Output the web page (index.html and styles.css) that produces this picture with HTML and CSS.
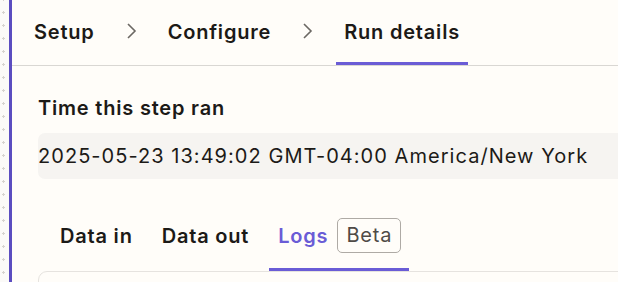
FILE: index.html
```html
<!DOCTYPE html>
<html lang="en">
<head>
  <meta charset="UTF-8">
  <meta name="viewport" content="width=device-width, initial-scale=1.0">
  <title>Run details</title>
  <link rel="stylesheet" href="styles.css">
</head>
<body>
<div class="layout">
  <div class="canvas-edge"></div>
  <div class="panel">
    <nav class="steps">
      <div class="step">Setup</div>
      <span class="chevron"><svg width="11" height="16" viewBox="0 0 11 16"><path d="M2 1 L9 8 L2 15" fill="none" stroke="#6b6863" stroke-width="1.6"/></svg></span>
      <div class="step">Configure</div>
      <span class="chevron"><svg width="11" height="16" viewBox="0 0 11 16"><path d="M2 1 L9 8 L2 15" fill="none" stroke="#6b6863" stroke-width="1.6"/></svg></span>
      <div class="step active">Run details</div>
    </nav>

    <div class="content">
      <div class="field-label">Time this step ran</div>
      <div class="field-value">2025-05-23 13:49:02 GMT-04:00 America/New York</div>

      <div class="tabs">
        <div class="tab">Data in</div>
        <div class="tab">Data out</div>
        <div class="tab active">Logs <span class="badge">Beta</span></div>
      </div>
      <div class="card"></div>
    </div>
  </div>
</div>
</body>
</html>
```

FILE: styles.css
```css
body {
  margin: 0;
  background-color: #fffdf9;
  font-family: Inter, "Noto Sans", sans-serif;
  color: #1c1a17;
  letter-spacing: 0.05em;
  overflow: hidden;
}
.layout {
  display: flex;
  height: 282px;
}
.canvas-edge {
  width: 9px;
  flex: none;
  background-color: #fbfaf8;
  background-image: radial-gradient(circle, #d6d3cf 1px, transparent 1.3px);
  background-size: 13px 13px;
  background-position: -3px 6px;
}
.panel {
  flex: 1;
  border-left: 3px solid #5b4dc0;
  min-width: 0;
}
.steps {
  display: flex;
  align-items: stretch;
  height: 65px;
  padding-left: 14px;
  border-bottom: 1px solid #d9d7d3;
}
.step {
  display: flex;
  align-items: center;
  padding: 0 8px;
  font-size: 20px;
  font-weight: 600;
  border-bottom: 3px solid transparent;
  margin-top: 1px;
}
.step.active {
  border-bottom-color: #6a5cd6;
}
.chevron {
  display: flex;
  align-items: center;
  padding: 0 23px;
  margin-top: -3px;
}
.content {
  padding: 30px 0 0 26px;
}
.field-label {
  font-size: 20px;
  font-weight: 600;
  line-height: 24px;
}
.field-value {
  margin-top: 13px;
  height: 46px;
  display: flex;
  align-items: center;
  background-color: #f6f4f1;
  border-radius: 7px;
  margin-right: -20px;
  font-size: 20px;
  letter-spacing: 0.052em;
}
.tabs {
  display: flex;
  gap: 12px;
  margin-top: 27px;
  padding-left: 13px;
}
.tab {
  display: flex;
  align-items: center;
  gap: 9px;
  padding: 12px 8px 15px 9px;
  font-size: 20px;
  font-weight: 600;
  border-bottom: 3px solid transparent;
}
.tab.active {
  color: #6a5cd6;
  border-bottom-color: #6a5cd6;
}
.badge {
  font-weight: 400;
  color: #4f4b47;
  border: 1px solid #aeaaa5;
  border-radius: 5px;
  padding: 5px 8px;
  line-height: 23px;
}
.card {
  height: 40px;
  margin-right: -20px;
  border: 1px solid #e6e3df;
  border-radius: 9px;
}
```
